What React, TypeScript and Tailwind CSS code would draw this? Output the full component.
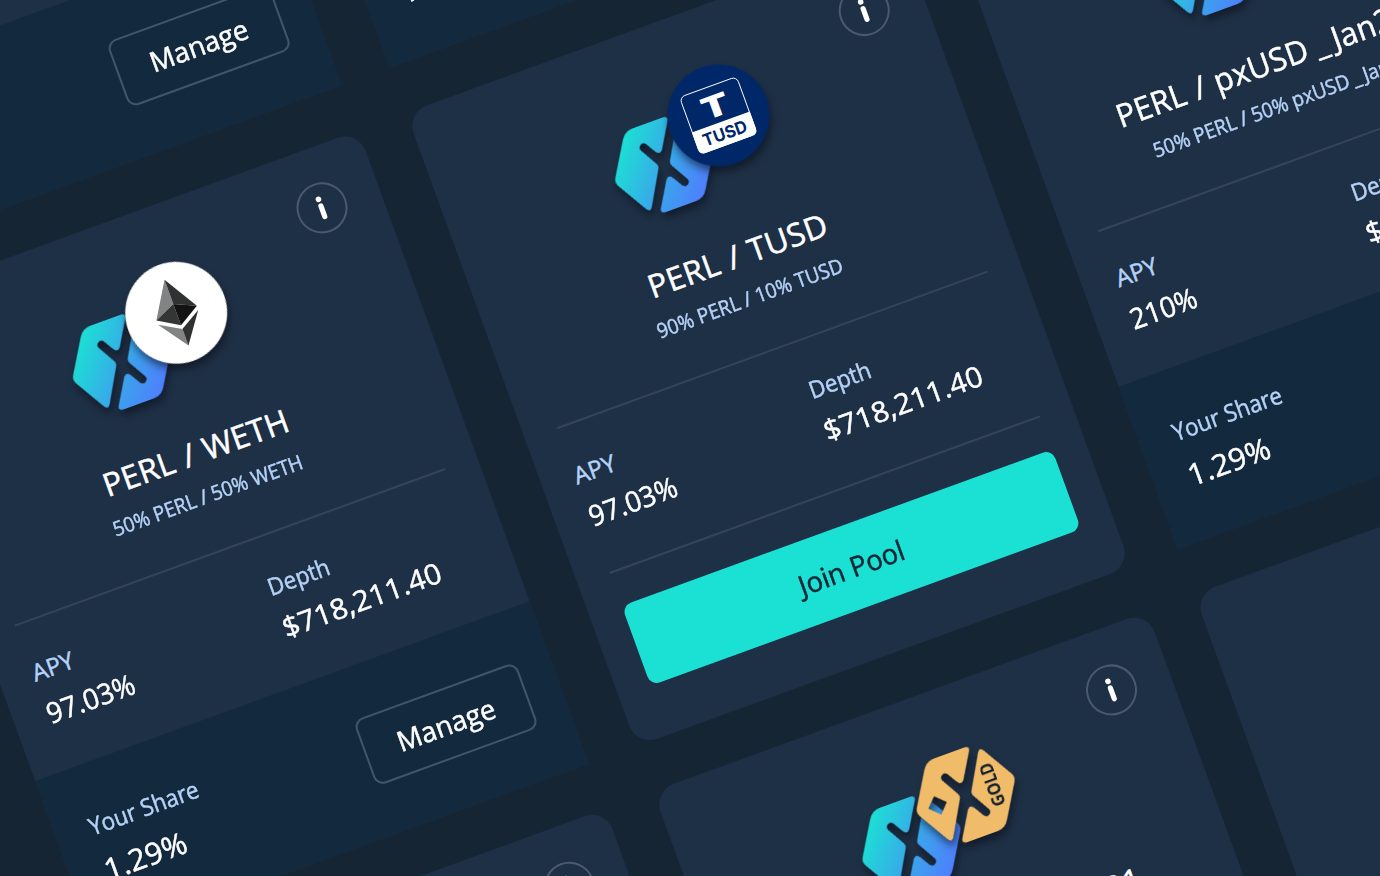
import React from "react";

type TokenKind = "weth" | "tusd" | "gold" | "pxusd";

interface Pool {
  token: TokenKind;
  title: string;
  weights: string;
  apy: string;
  depth: string;
  share?: string;
}

const pools: Pool[] = [
  { token: "weth", title: "PERL / WETH", weights: "50% PERL / 50% WETH", apy: "97.03%", depth: "$718,211.40", share: "1.29%" },
  { token: "tusd", title: "PERL / TUSD", weights: "90% PERL / 10% TUSD", apy: "97.03%", depth: "$718,211.40", share: "1.29%" },
  { token: "pxusd", title: "PERL / pxUSD _Jan2021", weights: "50% PERL / 50% pxUSD _Jan2021", apy: "210%", depth: "$718,211.40", share: "1.29%" },
  { token: "weth", title: "PERL / WETH", weights: "50% PERL / 50% WETH", apy: "97.03%", depth: "$718,211.40", share: "1.29%" },
  { token: "tusd", title: "PERL / TUSD", weights: "90% PERL / 10% TUSD", apy: "97.03%", depth: "$718,211.40" },
  { token: "pxusd", title: "PERL / pxUSD _Jan2021", weights: "50% PERL / 50% pxUSD _Jan2021", apy: "210%", depth: "$718,211.40", share: "1.29%" },
  { token: "weth", title: "PERL / WETH", weights: "50% PERL / 50% WETH", apy: "97.03%", depth: "$718,211.40" },
  { token: "gold", title: "PERL / pxGOLD_Jan21", weights: "50% PERL / 50% pxGOLD_Jan21", apy: "210%", depth: "$718,211.40" },
  { token: "tusd", title: "PERL / TUSD", weights: "90% PERL / 10% TUSD", apy: "97.03%", depth: "$718,211.40" },
];

// The two halves of the hexagonal mark, centred on the origin.
const LEFT_HALF =
  "M-30.5 -37.2 Q-26 -45 -17.5 -45 L14.8 -45 Q20.8 -44.6 17.8 -39.4 L4 -16.5 Q-.3 -8.8 -4.9 -17 L-9.9 -25.6 A4.2 4.2 0 0 0 -17.1 -21.4 L-6.9 -3.4 Q-5.4 -.6 -6.9 2 L-25.8 35 Q-29 40.8 -32.4 35 L-50.3 4.6 Q-53 0 -50.3 -4.4 Z";
const RIGHT_HALF =
  "M30.5 37.2 Q26 45 17.5 45 L-14.8 45 Q-20.8 44.6 -17.8 39.4 L-4 16.5 Q.3 8.8 4.9 17 L9.9 25.6 A4.2 4.2 0 0 0 17.1 21.4 L6.9 3.4 Q5.4 .6 6.9 -2 L25.8 -35 Q29 -40.8 32.4 -35 L50.3 -4.6 Q53 0 50.3 4.4 Z";
const DIAMOND = "M-30.2 -9.6 L-20.2 .3 L-29.6 10.2 L-39.8 .3 Z";

const SHADOW = "[filter:drop-shadow(0px_6px_4px_rgba(8,14,24,0.6))]";

function PerlMark({ id }: { id: string }) {
  return (
    <g transform="translate(61.8 96)">
      <defs>
        <linearGradient id={id} gradientUnits="userSpaceOnUse" x1="-42" y1="-26" x2="36" y2="38">
          <stop offset="0" stopColor="#1be1d3" />
          <stop offset="0.5" stopColor="#39a8ea" />
          <stop offset="1" stopColor="#507bff" />
        </linearGradient>
      </defs>
      <g className={SHADOW}>
        <path d={LEFT_HALF} fill={`url(#${id})`} />
        <path d={RIGHT_HALF} fill={`url(#${id})`} />
      </g>
    </g>
  );
}

function EthToken() {
  return (
    <g>
      <circle r="51" fill="#fff" className={SHADOW} />
      <path d="M.3 -35 L-21.3 .5 L.3 -9.3 Z" fill="#828384" />
      <path d="M.3 -35 L21.8 .5 L.3 -9.3 Z" fill="#303131" />
      <path d="M.3 -9.3 L-21.3 .5 L.3 13.3 Z" fill="#343535" />
      <path d="M.3 -9.3 L21.8 .5 L.3 13.3 Z" fill="#131313" />
      <path d="M-21.2 5 L.3 17.4 L.3 35 Z" fill="#828384" />
      <path d="M21.6 5 L.3 17.4 L.3 35 Z" fill="#2f3030" />
    </g>
  );
}

function TusdToken() {
  return (
    <g>
      <circle r="51" fill="#002868" className={SHADOW} />
      <rect x="-30.3" y="-30.3" width="60.6" height="60.6" rx="5.5" fill="none" stroke="#fff" strokeWidth="0.9" />
      <path d="M-30.8 7 H30.8 V25 Q30.8 30.8 25 30.8 H-25 Q-30.8 30.8 -30.8 25 Z" fill="#fff" />
      <text x="-13.6" y="0.6" fontSize="30" textLength="27.5" lengthAdjust="spacingAndGlyphs" className="fill-white font-['Inter',sans-serif] font-black">
        T
      </text>
      <text x="-23" y="25" fontSize="17" textLength="46" lengthAdjust="spacingAndGlyphs" className="fill-[#002868] font-['Inter',sans-serif] font-bold">
        TUSD
      </text>
    </g>
  );
}

function GoldToken() {
  return (
    <g className={SHADOW}>
      <path d={LEFT_HALF + " " + DIAMOND} fillRule="evenodd" fill="#f0bc6a" />
      <path d={RIGHT_HALF} fill="#f0bc6a" />
      <text
        transform="translate(34.5 22) rotate(-90)"
        fontSize="17.5"
        textLength="45"
        lengthAdjust="spacingAndGlyphs"
        className="fill-[#131f2d] font-['Open_Sans',sans-serif] font-bold"
      >
        GOLD
      </text>
    </g>
  );
}

function PxUsdToken() {
  return (
    <g className={SHADOW}>
      <path d={LEFT_HALF} fill="#5fd08a" />
      <path d={RIGHT_HALF} fill="#5fd08a" />
    </g>
  );
}

function TokenPair({ token, id }: { token: TokenKind; id: string }) {
  return (
    <svg width="200" height="160" viewBox="0 0 200 160" className="shrink-0 overflow-visible">
      <PerlMark id={id} />
      <g transform="translate(129.6 68.2)">
        {token === "weth" && <EthToken />}
        {token === "tusd" && <TusdToken />}
        {token === "gold" && <GoldToken />}
        {token === "pxusd" && <PxUsdToken />}
      </g>
    </svg>
  );
}

function InfoButton() {
  return (
    <button className="absolute right-[34.9px] top-[35.4px] size-[51px] rounded-full border-2 border-[#4a5970]">
      <svg viewBox="-23.5 -23.5 47 47" className="size-full">
        <circle cx="-0.4" cy="-9.3" r="2.8" fill="#fff" />
        <path d="M-.4 -2.2 V9.2" stroke="#fff" strokeWidth="5.2" strokeLinecap="round" />
      </svg>
    </button>
  );
}

// Opens a little room between the underscore and the low-hanging J of the expiry month.
function PoolName({ text }: { text: string }) {
  const [head, tail] = text.split("_");
  if (!tail) return <>{text}</>;
  return (
    <>
      {head}
      <span className="-ml-[0.08em] tracking-[0.17em]">_</span>
      {tail}
    </>
  );
}

function Stat({ label, value, narrow }: { label: string; value: string; narrow: boolean }) {
  return (
    <div className="flex flex-col items-start">
      <span className={"origin-left text-[24px] leading-[32px] text-[#b5d2f7] " + (label === "APY" ? "" : "scale-x-[0.935]")}>{label}</span>
      <span className={"mt-[7px] origin-left text-[28.5px] leading-[40px] text-white " + (narrow ? "scale-x-[0.96]" : "scale-x-[1.035]")}>
        {value}
      </span>
    </div>
  );
}

function PoolCard({ pool, id }: { pool: Pool; id: string }) {
  const dated = pool.token === "pxusd";
  return (
    <article className={"relative flex flex-col overflow-hidden bg-[#1e3046] " + (pool.share ? "rounded-t-[22px]" : "rounded-[22px]")}>
      <InfoButton />
      <header className="flex flex-col items-center whitespace-nowrap pt-[41.8px]">
        <TokenPair token={pool.token} id={id} />
        <h2
          className={
            "mt-[21.4px] text-[32px] leading-[48px] tracking-[0.2px] text-white [word-spacing:1.5px] " + (dated ? "scale-x-[0.975]" : "")
          }
        >
          <PoolName text={pool.title} />
        </h2>
        <p className="mt-[6.6px] mr-[6px] scale-x-[0.94] text-[20.5px] leading-[28px] text-[#b5d2f7]">
          <PoolName text={pool.weights} />
        </p>
      </header>
      <div className="mx-[34.1px] mt-[41.4px] h-[2px] shrink-0 bg-[#34455a]" />
      <div className="mt-[34px] grid grid-cols-[250.5px_1fr] px-[34.1px]">
        <Stat label="APY" value={pool.apy} narrow />
        <Stat label="Depth" value={pool.depth} narrow={false} />
      </div>
      {pool.share ? (
        <footer className="mt-auto flex h-[173px] items-start justify-between bg-[#132a3e] pl-[35px] pr-[34.4px]">
          <div className="mt-[45.5px] flex flex-col items-start">
            <span className="origin-left scale-x-[0.935] whitespace-nowrap text-[24px] leading-[32px] text-[#b5d2f7]">Your Share</span>
            <span className="mt-[10px] origin-left scale-x-[1.02] text-[30px] leading-[40px] text-white">{pool.share}</span>
          </div>
          <button className="mt-[51.8px] flex h-[70px] w-[173px] items-center justify-center rounded-[10px] border-2 border-[#42566a] text-[28px] text-white">
            <span className="mb-[1px] scale-x-[0.985]">Manage</span>
          </button>
        </footer>
      ) : (
        <div className="flex flex-col px-[34.1px]">
          <div className="mt-[39.2px] h-[2px] bg-[#34455a]" />
          <button className="mt-[34.2px] flex h-[84.5px] items-center justify-center rounded-[10px] bg-[#1be0d4] text-[28px] text-[#162534]">
            <span className="scale-x-[0.975]">Join Pool</span>
          </button>
        </div>
      )}
    </article>
  );
}

export default function App() {
  return (
    <main className="h-[876px] w-[1380px] overflow-hidden bg-[#162534] font-['Open_Sans',sans-serif] [-webkit-text-stroke:0.5px_currentColor]">
      <div className="flex size-0 origin-top-left -rotate-20">
        <div className="-ml-[234.1px] -mt-[477.8px] grid shrink-0 auto-rows-[674.6px] grid-cols-[526.2px_526.2px_526.2px] gap-x-[50.5px] gap-y-[47.9px]">
          {pools.map((pool, i) => (
            <PoolCard key={i} id={"perl-mark-" + i} pool={pool} />
          ))}
        </div>
      </div>
    </main>
  );
}
